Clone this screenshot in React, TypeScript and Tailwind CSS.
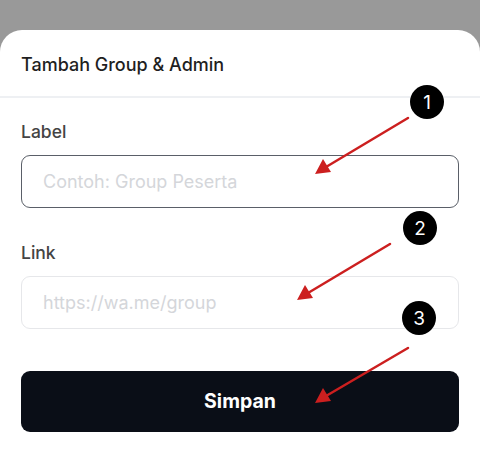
import React from 'react';

const font = { fontFamily: 'Inter, "Noto Sans", sans-serif' };

function Badge({ n, x, y }: { n: number; x: number; y: number }) {
  return (
    <div
      className="absolute w-[34px] h-[34px] rounded-full bg-black text-white flex items-center justify-center text-[19px] leading-none"
      style={{ left: x - 17, top: y - 17 }}
    >
      {n}
    </div>
  );
}

function Field({ label, placeholder, active }: { label: string; placeholder: string; active?: boolean }) {
  return (
    <div className="flex flex-col gap-[11px]">
      <label className="text-[17.5px] font-medium text-[#444] leading-6">{label}</label>
      <input
        placeholder={placeholder}
        className={`w-full h-[53px] px-[21px] rounded-[9px] border-[1.5px] text-[18px] placeholder:text-[#d4d6da] outline-none ${
          active ? 'border-[#5a5f68]' : 'border-[#e6e7ea]'
        }`}
      />
    </div>
  );
}

export default function App() {
  return (
    <div className="relative w-[480px] h-[450px] bg-[#999999] overflow-hidden flex flex-col pt-[30px]" style={font}>
      <div className="flex-1 bg-white rounded-t-[22px] flex flex-col">
        {/* header */}
        <div className="h-[68px] px-[21px] flex items-center border-b-2 border-[#eef0f3]">
          <h2 className="text-[18px] font-medium text-[#1f1f1f] pt-[2px]">Tambah Group &amp; Admin</h2>
        </div>

        {/* form */}
        <div className="px-[21px] pt-[22px] flex flex-col">
          <div className="flex flex-col gap-[33px]">
            <Field label="Label" placeholder="Contoh: Group Peserta" active />
            <Field label="Link" placeholder="https://wa.me/group" />
          </div>
          <button className="mt-[42px] w-full h-[61px] rounded-[9px] bg-[#0a0e17] text-white text-[19.5px] font-bold">
            Simpan
          </button>
        </div>
      </div>

      {/* annotations */}
      <svg className="absolute inset-0 pointer-events-none" width="480" height="450">
        <g stroke="#cc1f1f" strokeWidth="2.5" strokeLinecap="round">
          <line x1="408" y1="118" x2="326" y2="167" />
          <line x1="390" y1="244" x2="308" y2="293" />
          <line x1="408" y1="348" x2="326" y2="396" />
        </g>
        <g fill="#cc1f1f">
          <polygon points="315,174 323,159 331,172" />
          <polygon points="297,300 305,285 313,298" />
          <polygon points="315,403 323,388 331,401" />
        </g>
      </svg>
      <Badge n={1} x={427} y={102} />
      <Badge n={2} x={420} y={228} />
      <Badge n={3} x={419} y={318} />
    </div>
  );
}
